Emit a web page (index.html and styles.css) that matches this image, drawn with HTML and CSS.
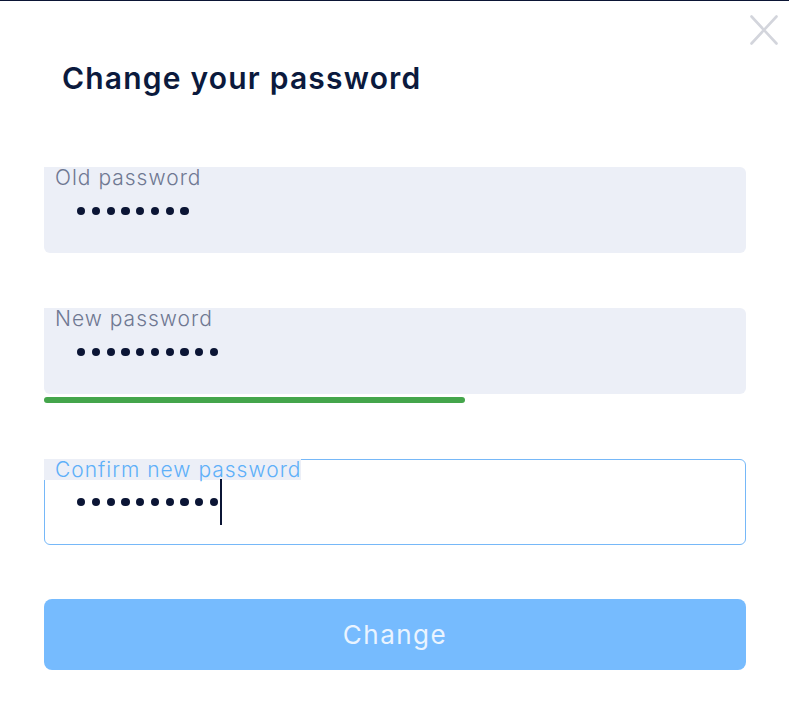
FILE: index.html
```html
<!DOCTYPE html>
<html lang="en">
<head>
<meta charset="utf-8">
<title>Change your password</title>
<link rel="stylesheet" href="styles.css">
</head>
<body>
<div class="topline"></div>
<div class="modal">
  <button class="close" aria-label="Close">
    <svg width="28" height="30" viewBox="0 0 28 30"><path d="M1.5 1.5 L26.5 28.5 M26.5 1.5 L1.5 28.5" stroke="#d3d5dc" stroke-width="2.6" stroke-linecap="round" fill="none"/></svg>
  </button>
  <h1 class="title">Change your password</h1>
  <form class="form">
    <div class="field">
      <div class="label">Old password</div>
      <div class="dots"><span></span><span></span><span></span><span></span><span></span><span></span><span></span><span></span></div>
    </div>
    <div class="field field-new">
      <div class="label">New password</div>
      <div class="dots"><span></span><span></span><span></span><span></span><span></span><span></span><span></span><span></span><span></span><span></span></div>
    </div>
    <div class="strength"><div class="strength-fill"></div></div>
    <div class="field field-focus">
      <div class="label">Confirm new password</div>
      <div class="dots"><span></span><span></span><span></span><span></span><span></span><span></span><span></span><span></span><span></span><span></span><i class="caret"></i></div>
    </div>
    <button type="button" class="submit">Change</button>
  </form>
</div>
</body>
</html>
```

FILE: styles.css
```css
* { box-sizing: border-box; }
html, body { margin: 0; padding: 0; background: #ffffff; }
body { font-family: "Inter", "Noto Sans", sans-serif; color: #0b1a3d; }

.topline { height: 1px; background: #0b1535; }

.modal { position: relative; padding: 0 43px 0 44px; }

.close {
  position: absolute; top: 14px; right: 11px;
  width: 28px; height: 30px; padding: 0; border: 0; background: none; cursor: pointer;
}
.close svg { display: block; }

.title {
  margin: 0; padding: 58px 0 0 18px;
  font-size: 30px; line-height: 38px; font-weight: 600; letter-spacing: 1.2px;
  color: #0b1a3d;
}

.form { display: flex; flex-direction: column; margin-top: 70px; }

.field {
  height: 86px; background: #eceff7;
  border-radius: 0 6px 6px 6px;
  display: flex; flex-direction: column;
}
.field-new { margin-top: 55px; }
.field-focus {
  margin-top: 56px; background: #ffffff;
  border: 1px solid #76b8f8; border-radius: 0 6px 6px 6px;
}

.label {
  align-self: flex-start;
  height: 21px; line-height: 21px; padding-left: 11px;
  font-size: 21px; font-weight: 300; letter-spacing: 1px; color: #6f7892;
  background: #eceff7; white-space: nowrap;
}
.field-focus .label { margin: -1px 0 0 -1px; color: #5eb0f9; }

.dots { display: flex; align-items: center; gap: 6.6px; padding-left: 33px; margin-top: 19px; height: 8px; }
.field-focus .dots { margin-top: 18px; padding-left: 32px; }
.dots span { width: 8.2px; height: 8.2px; border-radius: 50%; background: #0b1535; flex: none; }
.caret { display: block; width: 2px; height: 46px; background: #0b1535; margin-left: -4.6px; flex: none; }

.strength { margin-top: 3px; height: 6px; }
.strength-fill { width: 421px; height: 6px; border-radius: 3px; background: #44a54b; }

.submit {
  margin-top: 54px; height: 71px; width: 100%;
  border: 0; border-radius: 8px; background: #76bbfe;
  font-family: inherit; font-size: 26px; font-weight: 400; letter-spacing: 1.5px; color: #eaf4ff;
}
```
